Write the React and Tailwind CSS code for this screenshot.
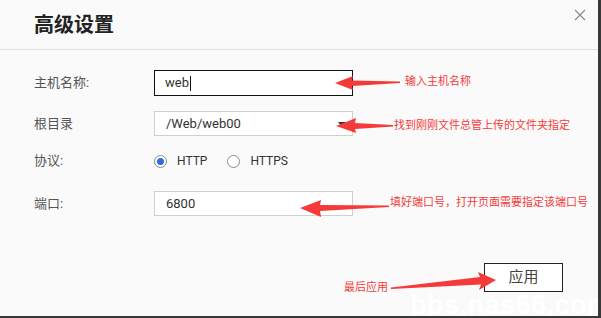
import React, { useState } from "react";

const cjk = { fontFamily: 'Roboto, "Noto Sans CJK SC", sans-serif' };

const Arrows = () => (
  <svg
    className="absolute inset-0 pointer-events-none"
    width="598"
    height="316"
    viewBox="0 0 598 316"
  >
    <g fill="#f53a3a">
      {/* host name */}
      <polygon points="335,83 353,76 352,80.5 400,81.5 400,83 352,86 353,90" />
      {/* root dir */}
      <polygon points="336,126 356,118 355,123 393,125 393,126.5 355,129 356,133" />
      {/* port */}
      <polygon points="300,208 321,200 320,205 389,205.5 389,207 320,211 321,217" />
      {/* apply */}
      <polygon points="496,280 479,290 481,284.5 391,289 391,287.5 480,277 478,272" />
    </g>
  </svg>
);

const Radio = ({ checked, label, onClick }) => (
  <button type="button" onClick={onClick} className="flex items-center gap-[10px]">
    <span className="w-[13px] h-[13px] rounded-full border border-[#8a8a8a] bg-white flex items-center justify-center">
      {checked && <span className="w-[7px] h-[7px] rounded-full bg-[#2f6fd6]" />}
    </span>
    <span className="text-[12px] text-[#333]">{label}</span>
  </button>
);

const App = () => {
  const [proto, setProto] = useState("http");

  return (
    <div className="w-[601px] h-[318px] bg-[#383838] overflow-hidden" style={cjk}>
      <div className="relative w-[598px] h-[316px] bg-[#fafafa] overflow-hidden">
        {/* header */}
        <div className="h-[50px] border-b border-[#dedede] flex items-start justify-between pl-[34px] pr-[12px]">
          <h1 className="mt-[11px] text-[20px] font-bold text-[#222] leading-[28px]">高级设置</h1>
          <svg className="mt-[9px]" width="12" height="12" viewBox="0 0 12 12">
            <path d="M1 1 L11 11 M11 1 L1 11" stroke="#8c8c8c" strokeWidth="1.2" />
          </svg>
        </div>

        {/* form */}
        <div className="pl-[34px] text-[13px] text-[#555]">
          <div className="mt-[20px] flex items-center h-[26px]">
            <label className="w-[120px]">主机名称:</label>
            <div className="w-[199px] h-[26px] border-[1.5px] border-[#111] bg-white flex items-center pl-[10px] text-[#333]">
              web<span className="w-px h-[15px] bg-[#111] ml-px" />
            </div>
          </div>

          <div className="mt-[15px] flex items-center h-[25px]">
            <label className="w-[120px]">根目录</label>
            <div className="relative w-[199px] h-[25px] border border-[#cfcfcf] bg-white flex items-center pl-[11px] text-[#333]">
              /Web/web00
              <span className="absolute right-[6px] top-[10px] w-0 h-0 border-l-[4px] border-r-[4px] border-t-[5px] border-l-transparent border-r-transparent border-t-[#333]" />
            </div>
          </div>

          <div className="mt-[15px] flex items-center h-[20px]">
            <label className="w-[120px]">协议:</label>
            <div className="flex items-center gap-[20px]">
              <Radio checked={proto === "http"} label="HTTP" onClick={() => setProto("http")} />
              <Radio checked={proto === "https"} label="HTTPS" onClick={() => setProto("https")} />
            </div>
          </div>

          <div className="mt-[20px] flex items-center h-[25px]">
            <label className="w-[120px]">端口:</label>
            <div className="w-[199px] h-[25px] border border-[#cfcfcf] bg-white flex items-center pl-[11px] text-[#333]">
              6800
            </div>
          </div>
        </div>

        <div className="flex justify-end pr-[35px] mt-[47px]">
          <button
            type="button"
            className="w-[79px] h-[29px] border-[1.5px] border-[#222] bg-white text-[15px] text-[#444]"
          >
            应用
          </button>
        </div>

        {/* annotations */}
        <Arrows />
        <span className="absolute left-[405px] top-[75px] text-[11px] leading-[14px] text-[#f53a3a]">输入主机名称</span>
        <span className="absolute left-[394px] top-[119px] text-[11px] leading-[14px] text-[#f53a3a]">找到刚刚文件总管上传的文件夹指定</span>
        <span className="absolute left-[390px] top-[196px] text-[11px] leading-[14px] text-[#f53a3a]">填好端口号，打开页面需要指定该端口号</span>
        <span className="absolute left-[344px] top-[281px] text-[11px] leading-[14px] text-[#f53a3a]">最后应用</span>
        <span
          className="absolute left-[410px] top-[289px] text-[27px] font-bold text-white leading-[32px] tracking-[0.5px]"
          style={{ fontFamily: '"Liberation Sans", sans-serif' }}
        >
          bbs.nas66.com
        </span>
      </div>
    </div>
  );
};

export default App;
